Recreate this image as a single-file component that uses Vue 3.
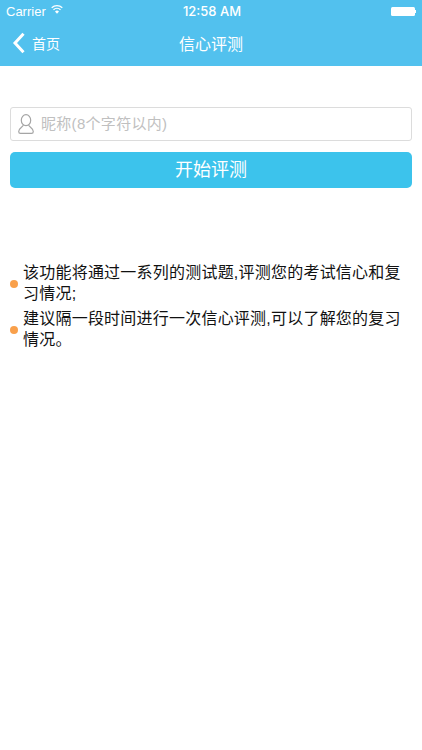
<template>
  <div class="page">
    <header class="head">
      <div class="status">
        <div class="st-left">
          <span class="carrier">Carrier</span>
          <svg class="wifi" width="12" height="9" viewBox="0 0 14 10"><path d="M7 10 4.700 7.300a3.400 3.400 0 0 1 4.600 0Z" fill="#fff"/><path d="M2.900 5.200a6 6 0 0 1 8.200 0" fill="none" stroke="#fff" stroke-width="1.500"/><path d="M.8 3A9.200 9.200 0 0 1 13.200 3" fill="none" stroke="#fff" stroke-width="1.500"/></svg>
        </div>
        <span class="time">12:58 AM</span>
        <div class="battery"><i class="cell"></i><i class="nub"></i></div>
      </div>
      <nav class="nav">
        <div class="back">
          <svg width="14" height="22" viewBox="0 0 14 22"><path d="M11.500 1.800 3 11l8.500 9.200" fill="none" stroke="#fff" stroke-width="3"/></svg>
          <span class="back-text">首页</span>
        </div>
        <div class="title">信心评测</div>
      </nav>
    </header>
    <main class="body">
      <div class="field">
        <svg class="user" width="16" height="20" viewBox="0 0 16 20"><ellipse cx="8" cy="6.200" rx="4.700" ry="5.500" fill="none" stroke="#a5a5a5" stroke-width="1.200"/><path d="M5.300 11C5 13 .7 14 .7 17.500c0 1.300.7 1.900 1.800 1.900h11c1.100 0 1.800-.6 1.800-1.900C15.300 14 11 13 10.700 11" fill="none" stroke="#a5a5a5" stroke-width="1.200"/></svg>
        <span class="ph">昵称(8个字符以内)</span>
      </div>
      <button class="start"><span>开始评测</span></button>
      <ul class="notes">
        <li v-for="n in notes" :key="n"><i class="dot"></i><p>{{ n }}</p></li>
      </ul>
    </main>
  </div>
</template>

<script setup>
const notes = [
  '该功能将通过一系列的测试题,评测您的考试信心和复习情况;',
  '建议隔一段时间进行一次信心评测,可以了解您的复习情况。'
]
</script>

<style>
html, body { margin: 0; background: #fff; }
</style>

<style scoped>
.page { width: 422px; height: 750px; overflow: hidden; background: #fff; font-family: "Liberation Sans", "Noto Sans CJK SC", sans-serif; }
.head { height: 66px; background: #52c1ee; color: #fff; }
.status { height: 22px; display: flex; align-items: center; justify-content: space-between; padding: 0 6px; position: relative; font-size: 13px; }
.st-left { display: flex; align-items: center; gap: 5px; }
.carrier { font-size: 13px; }
.wifi { margin-top: -3px; }
.time { position: absolute; left: 2px; right: 0; text-align: center; font-family: Inter, "Liberation Sans", sans-serif; font-weight: 500; font-size: 13px; pointer-events: none; }
.battery { display: flex; align-items: center; }
.cell { display: block; width: 24px; height: 9px; background: #fff; border-radius: 1.500px; }
.nub { display: block; width: 1.500px; height: 3px; background: #fff; }
.nav { height: 42px; position: relative; display: flex; align-items: center; justify-content: center; }
.back { position: absolute; left: 12px; top: 0; height: 42px; display: flex; align-items: center; gap: 6px; }
.back-text { font-size: 14px; }
.title { font-size: 16px; }
.body { padding: 41px 10px 0; }
.field { height: 32px; border: 1px solid #dcdcdc; border-radius: 3px; display: flex; align-items: center; gap: 7px; padding-left: 7px; }
.ph { color: #c0c0c0; font-size: 15px; letter-spacing: .3px; padding-bottom: 3px; }
.start { display: block; width: 100%; height: 36px; margin-top: 11px; border: 0; border-radius: 5px; background: #3cc3ec; color: #fff; font: inherit; font-size: 18px; padding: 0 0 4px; }
.notes { list-style: none; margin: 74px 0 0; padding: 0; }
.notes li { display: flex; align-items: center; padding-right: 4px; margin-bottom: 4px; }
.dot { flex: none; width: 8px; height: 8px; border-radius: 50%; background: #f9a04b; margin-right: 5px; margin-top: 1px; }
.notes p { margin: 0; font-size: 16px; line-height: 21px; letter-spacing: .22px; color: #111; }
</style>
